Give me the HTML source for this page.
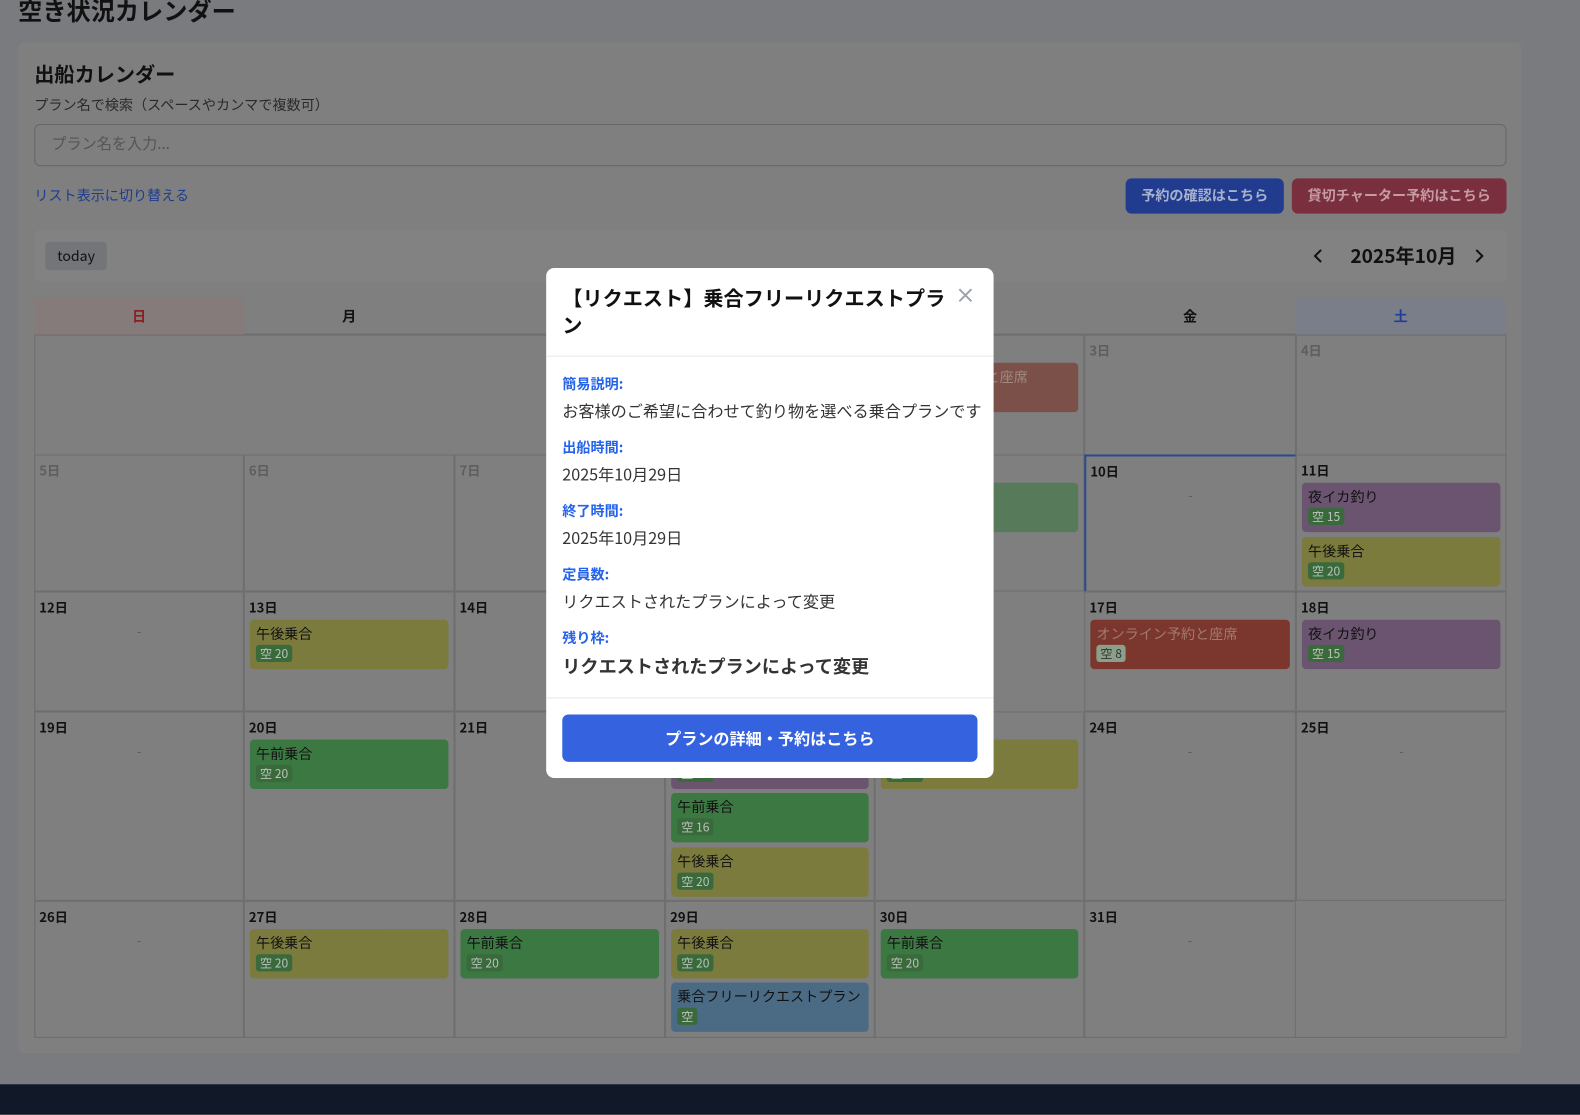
<!DOCTYPE html>
<html><head><meta charset="utf-8"><style>
*{box-sizing:border-box;margin:0;padding:0}
body{width:1580px;height:1094px;overflow:hidden;background:#7a7b7e;font-family:"Noto Sans CJK JP","Liberation Sans",sans-serif;position:relative;color:#111}
#w{position:absolute;left:0;top:0;width:1568px;height:1086px;transform:scale(1.0077);transform-origin:0 0}
.a{position:absolute}
.card{left:18px;top:42px;width:1492px;height:1003px;background:#7f7f80;border-radius:6px}
.cell{position:absolute;border:1px solid #6e6e6e;}
.d{position:absolute;left:4px;top:5px;font-size:13px;font-weight:bold;color:#111}
.p{color:#5e5e5e}
.ev{position:absolute;left:5px;right:5px;height:49px;border-radius:4px;padding:5px 6px 0;font-size:14px;color:#111;line-height:19px}
.b{display:inline-block;font-size:12px;padding:0 4px;border-radius:3px;background:#3a6a3c;color:#b8c4b8;line-height:17px}
.y{background:#7b7b3d}.g{background:#3c7842}.pu{background:#6b5470}.r{background:#7b372e;color:#a27a70}.bl{background:#4b6a84}
.dash{position:absolute;left:0;right:0;top:30px;text-align:center;color:#555;font-size:12px}
.lbl{color:#2563eb;font-weight:bold;font-size:14px;margin-top:15px;line-height:20px}
.val{font-size:16px;color:#333;margin-top:4px;line-height:24px}
</style></head><body><div id="w">
<div class="a" style="left:18px;top:-8px;font-size:24px;font-weight:bold;color:#111">空き状況カレンダー</div>
<div class="a card"></div>
<div class="a" style="left:34px;top:58px;font-size:20px;font-weight:bold">出船カレンダー</div>
<div class="a" style="left:34px;top:94px;font-size:14px;color:#2a2a2a">プラン名で検索（スペースやカンマで複数可）</div>
<div class="a" style="left:34px;top:123px;width:1461px;height:42px;border:1px solid #666;border-radius:6px;padding:8px 16px;font-size:15px;color:#555">プラン名を入力...</div>
<div class="a" style="left:34px;top:184px;font-size:14px;color:#1f3d8e">リスト表示に切り替える</div>
<div class="a" style="left:1117px;top:177px;width:157px;height:35px;background:#213c8f;border-radius:6px;color:#a7b1cc;font-size:14px;font-weight:bold;text-align:center;line-height:35px">予約の確認はこちら</div>
<div class="a" style="left:1282px;top:177px;width:213px;height:35px;background:#7a2f3e;border-radius:6px;color:#c49aa3;font-size:14px;font-weight:bold;text-align:center;line-height:35px">貸切チャーター予約はこちら</div>
<div class="a" style="left:34px;top:228px;width:1461px;height:52px;background:#828283;border-radius:6px"></div>
<div class="a" style="left:45px;top:240px;width:61px;height:28px;background:#747578;border-radius:4px;font-size:14px;text-align:center;line-height:28px">today</div>
<svg class="a" style="left:1302px;top:246px" width="12" height="16" viewBox="0 0 12 16"><path d="M9 2 L3 8 L9 14" stroke="#111" stroke-width="2" fill="none"/></svg>
<div class="a" style="left:1340px;top:240px;font-size:19px;font-weight:bold">2025年10月</div>
<svg class="a" style="left:1462px;top:246px" width="12" height="16" viewBox="0 0 12 16"><path d="M3 2 L9 8 L3 14" stroke="#111" stroke-width="2" fill="none"/></svg>
<div class="a" style="left:34px;top:296px;width:1461px;height:37px;border-bottom:2px solid #6e6e6e"></div>
<div class="a" style="left:34px;top:296px;width:208px;height:36px;background:#857b7b;color:#8a1f1f;text-align:center;line-height:36px;font-size:14px;font-weight:bold">日</div>
<div class="a" style="left:242px;top:296px;width:209px;line-height:36px;text-align:center;font-size:14px;font-weight:bold">月</div>
<div class="a" style="left:1076px;top:296px;width:210px;line-height:36px;text-align:center;font-size:14px;font-weight:bold">金</div>
<div class="a" style="left:1286px;top:296px;width:208px;height:36px;background:#7a7e88;color:#1f3d9a;text-align:center;line-height:36px;font-size:14px;font-weight:bold">土</div>
<div class="cell" style="left:34px;top:332px;width:1461px;height:698px;border:1px solid #6e6e6e"></div>

<div class="cell" style="left:1076px;top:332px;width:210px;height:120px"><div class="d p">3日</div></div>
<div class="cell" style="left:1286px;top:332px;width:209px;height:120px"><div class="d p">4日</div></div>
<div class="cell" style="left:868px;top:332px;width:208px;height:120px"><div class="ev" style="top:27px;background:#7a5048;color:#a08880">オンライン予約と座席</div></div>
<div class="cell" style="left:34px;top:451px;width:208px;height:136px"><div class="d p">5日</div></div>
<div class="cell" style="left:242px;top:451px;width:209px;height:136px"><div class="d p">6日</div></div>
<div class="cell" style="left:451px;top:451px;width:209px;height:136px"><div class="d p">7日</div></div>
<div class="cell" style="left:868px;top:451px;width:208px;height:136px"><div class="ev" style="top:27px;background:#577a5a"></div></div>
<div class="cell" style="left:1076px;top:451px;width:210px;height:136px;border:1px solid #6e6e6e;border-top:2px solid #2a4a8f;border-left:2px solid #2a4a8f"><div class="d">10日</div><div class="dash">-</div></div>
<div class="cell" style="left:1286px;top:451px;width:209px;height:136px"><div class="d">11日</div>
<div class="ev pu" style="top:27px">夜イカ釣り<br><span class="b">空 15</span></div>
<div class="ev y" style="top:81px">午後乗合<br><span class="b">空 20</span></div></div>
<div class="cell" style="left:34px;top:587px;width:208px;height:119px"><div class="d">12日</div><div class="dash">-</div></div>
<div class="cell" style="left:242px;top:587px;width:209px;height:119px"><div class="d">13日</div><div class="ev y" style="top:27px">午後乗合<br><span class="b">空 20</span></div></div>
<div class="cell" style="left:451px;top:587px;width:209px;height:119px"><div class="d">14日</div></div>
<div class="cell" style="left:1076px;top:587px;width:210px;height:119px"><div class="d">17日</div><div class="ev r" style="top:27px">オンライン予約と座席<br><span class="b" style="background:#8aa08a;color:#333">空 8</span></div></div>
<div class="cell" style="left:1286px;top:587px;width:209px;height:119px"><div class="d">18日</div><div class="ev pu" style="top:27px">夜イカ釣り<br><span class="b">空 15</span></div></div>
<div class="cell" style="left:34px;top:706px;width:208px;height:188px"><div class="d">19日</div><div class="dash">-</div></div>
<div class="cell" style="left:242px;top:706px;width:209px;height:188px"><div class="d">20日</div><div class="ev g" style="top:27px">午前乗合<br><span class="b">空 20</span></div></div>
<div class="cell" style="left:451px;top:706px;width:209px;height:188px"><div class="d">21日</div></div>
<div class="cell" style="left:660px;top:706px;width:208px;height:188px"><div class="d">22日</div>
<div class="ev pu" style="top:27px">夜イカ釣り<br><span class="b">空 15</span></div>
<div class="ev g" style="top:80px">午前乗合<br><span class="b">空 16</span></div>
<div class="ev y" style="top:134px">午後乗合<br><span class="b">空 20</span></div></div>
<div class="cell" style="left:868px;top:706px;width:208px;height:188px"><div class="d">23日</div><div class="ev y" style="top:27px">午後乗合<br><span class="b">空 20</span></div></div>
<div class="cell" style="left:1076px;top:706px;width:210px;height:188px"><div class="d">24日</div><div class="dash">-</div></div>
<div class="cell" style="left:1286px;top:706px;width:209px;height:188px"><div class="d">25日</div><div class="dash">-</div></div>
<div class="cell" style="left:34px;top:894px;width:208px;height:136px"><div class="d">26日</div><div class="dash">-</div></div>
<div class="cell" style="left:242px;top:894px;width:209px;height:136px"><div class="d">27日</div><div class="ev y" style="top:27px">午後乗合<br><span class="b">空 20</span></div></div>
<div class="cell" style="left:451px;top:894px;width:209px;height:136px"><div class="d">28日</div><div class="ev g" style="top:27px">午前乗合<br><span class="b">空 20</span></div></div>
<div class="cell" style="left:660px;top:894px;width:208px;height:136px"><div class="d">29日</div>
<div class="ev y" style="top:27px">午後乗合<br><span class="b">空 20</span></div>
<div class="ev bl" style="top:80px">乗合フリーリクエストプラン<br><span class="b">空</span></div></div>
<div class="cell" style="left:868px;top:894px;width:208px;height:136px"><div class="d">30日</div><div class="ev g" style="top:27px">午前乗合<br><span class="b">空 20</span></div></div>
<div class="cell" style="left:1076px;top:894px;width:210px;height:136px"><div class="d">31日</div><div class="dash">-</div></div>

<div class="a" style="left:0;top:1076px;width:1580px;height:30px;background:#111827"></div>

<div class="a" style="left:542px;top:266px;width:444px;height:506px;background:#fff;border-radius:8px;overflow:hidden">
<div style="position:absolute;left:16px;top:15px;width:385px;font-size:20px;font-weight:bold;line-height:27px;color:#111">【リクエスト】乗合フリーリクエストプラン</div>
<svg style="position:absolute;left:408px;top:19px" width="16" height="16" viewBox="0 0 16 16"><path d="M2 2 L14 14 M14 2 L2 14" stroke="#9ca3af" stroke-width="2"/></svg>
<div style="position:absolute;left:0;right:0;top:87px;border-top:1px solid #e5e7eb"></div>
<div style="position:absolute;left:16px;top:92px;right:10px">
<div class="lbl" style="margin-top:13px">簡易説明:</div><div class="val">お客様のご希望に合わせて釣り物を選べる乗合プランです</div>
<div class="lbl">出船時間:</div><div class="val">2025年10月29日</div>
<div class="lbl">終了時間:</div><div class="val">2025年10月29日</div>
<div class="lbl">定員数:</div><div class="val">リクエストされたプランによって変更</div>
<div class="lbl">残り枠:</div><div class="val" style="font-size:18px;font-weight:bold;margin-top:6px">リクエストされたプランによって変更</div>
</div>
<div style="position:absolute;left:0;right:0;top:426px;border-top:1px solid #e5e7eb"></div>
<div style="position:absolute;left:16px;top:443px;width:412px;height:47px;background:#3563e0;border-radius:6px;color:#fff;font-size:16px;font-weight:bold;text-align:center;line-height:47px">プランの詳細・予約はこちら</div>
</div>
</div></body></html>
